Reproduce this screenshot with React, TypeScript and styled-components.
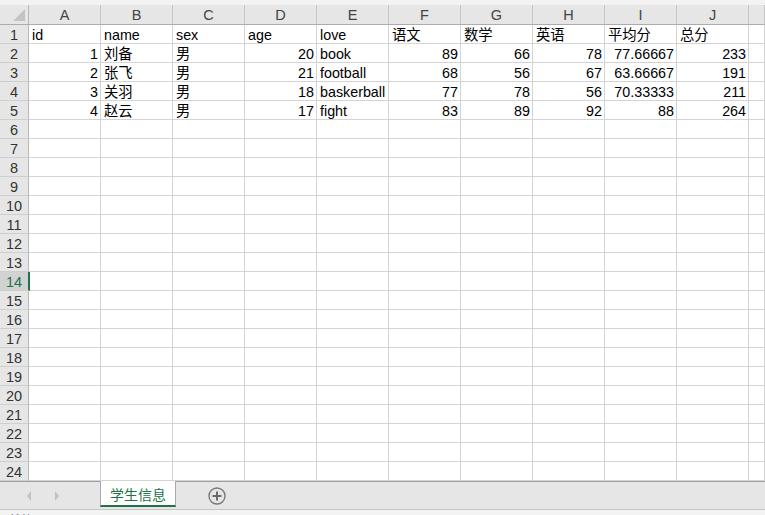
import React from "react";
import styled, { createGlobalStyle } from "styled-components";

const Global = createGlobalStyle`
  html, body { margin: 0; padding: 0; background: #ffffff; }
  body { font-family: "Liberation Sans", "Noto Sans CJK SC", sans-serif; overflow: hidden; }
  #root { width: 765px; height: 515px; overflow: hidden; }
`;

const Page = styled.div`
  width: 765px;
  height: 515px;
  display: flex;
  flex-direction: column;
  overflow: hidden;
  background: #ffffff;
`;

const TopBand = styled.div`
  height: 5px;
  flex: none;
  background: #f3f3f3;
`;

const Sheet = styled.div`
  display: grid;
  grid-template-columns: 29px repeat(10, 72px) 1fr;
  grid-auto-rows: 19px;
  grid-template-rows: 20px;
  flex: none;
  height: 476px;
  overflow: hidden;
`;

const Corner = styled.div`
  position: relative;
  background: #e6e6e6;
  border-right: 1px solid #b8b8b8;
  border-bottom: 1px solid #acacac;
  &::after {
    content: "";
    position: absolute;
    right: 3px;
    bottom: 3px;
    width: 0;
    height: 0;
    border-left: 12px solid transparent;
    border-bottom: 12px solid #c4c4c4;
  }
`;

const ColHead = styled.div`
  background: #e6e6e6;
  border-right: 1px solid #c6c6c6;
  border-bottom: 1px solid #acacac;
  display: flex;
  align-items: center;
  justify-content: center;
  color: #444444;
  font-size: 14.5px;
  padding-top: 1px;
`;

const RowHead = styled.div<{ $active?: boolean }>`
  background: ${(p) => (p.$active ? "#d2d2d2" : "#e6e6e6")};
  border-right: ${(p) => (p.$active ? "2px solid #217346" : "1px solid #b8b8b8")};
  margin-right: ${(p) => (p.$active ? "-1px" : "0")};
  border-bottom: 1px solid #cfcfcf;
  display: flex;
  align-items: center;
  justify-content: center;
  color: ${(p) => (p.$active ? "#217346" : "#333333")};
  font-size: 14.5px;
  line-height: 18px;
  padding-top: 1px;
  box-sizing: border-box;
  position: relative;
  z-index: 1;
`;

const Cell = styled.div<{ $num?: boolean }>`
  border-right: 1px solid #d4d4d4;
  border-bottom: 1px solid #d4d4d4;
  display: flex;
  align-items: center;
  justify-content: ${(p) => (p.$num ? "flex-end" : "flex-start")};
  padding: 1px ${(p) => (p.$num ? "2px" : "0")} 0 ${(p) => (p.$num ? "0" : "3px")};
  box-sizing: border-box;
  font-size: 14.3px;
  line-height: 18px;
  color: #000000;
  white-space: nowrap;
  overflow: hidden;
`;

const TabBar = styled.div`
  height: 27px;
  flex: none;
  background: #e6e6e6;
  border-top: 1px solid #9f9f9f;
  display: flex;
  align-items: stretch;
`;

const NavArea = styled.div`
  width: 100px;
  display: flex;
  align-items: center;
  padding-left: 27px;
  gap: 24px;
  box-sizing: border-box;
`;

const Arrow = styled.span<{ $dir: "l" | "r" }>`
  width: 0;
  height: 0;
  border-top: 5px solid transparent;
  border-bottom: 5px solid transparent;
  ${(p) => (p.$dir === "l" ? "border-right: 4px solid #c2c2c2;" : "border-left: 4px solid #c2c2c2;")}
`;

const Tab = styled.div`
  width: 74px;
  margin-top: -1px;
  margin-bottom: 2px;
  background: #ffffff;
  border-left: 1px solid #a9a9a9;
  border-right: 1px solid #a9a9a9;
  border-bottom: 2px solid #217346;
  display: flex;
  align-items: center;
  justify-content: center;
  color: #217346;
  font-family: "Noto Sans CJK SC", sans-serif;
  font-size: 14px;
  padding-top: 1px;
`;

const AddArea = styled.div`
  display: flex;
  align-items: center;
  padding-left: 32px;
`;

const StatusBar = styled.div`
  flex: 1;
  background: #f3f3f3;
  border-top: 1px solid #c6c6c6;
  padding-left: 9px;
  font-family: "Noto Sans CJK SC", sans-serif;
  font-size: 12px;
  color: #444444;
  line-height: 20px;
  overflow: hidden;
`;

const cols = ["A", "B", "C", "D", "E", "F", "G", "H", "I", "J", ""];

type V = string | number;
const data: V[][] = [
  ["id", "name", "sex", "age", "love", "语文", "数学", "英语", "平均分", "总分"],
  [1, "刘备", "男", 20, "book", 89, 66, 78, "77.66667", 233],
  [2, "张飞", "男", 21, "football", 68, 56, 67, "63.66667", 191],
  [3, "关羽", "男", 18, "baskerball", 77, 78, 56, "70.33333", 211],
  [4, "赵云", "男", 17, "fight", 83, 89, 92, 88, 264],
];

const isNum = (v: V) => typeof v === "number" || /^[\d.]+$/.test(String(v));

export default function App() {
  const rows = Array.from({ length: 24 }, (_, i) => i + 1);
  return (
    <Page>
      <Global />
      <TopBand />
      <Sheet>
        <Corner />
        {cols.map((c, i) => (
          <ColHead key={"h" + i}>{c}</ColHead>
        ))}
        {rows.map((r) => (
          <React.Fragment key={r}>
            <RowHead $active={r === 14}>{r}</RowHead>
            {cols.map((_, ci) => {
              const v = data[r - 1]?.[ci];
              const has = v !== undefined && v !== "";
              return (
                <Cell key={ci} $num={has && isNum(v as V)}>
                  {has ? String(v) : ""}
                </Cell>
              );
            })}
          </React.Fragment>
        ))}
      </Sheet>
      <TabBar>
        <NavArea>
          <Arrow $dir="l" />
          <Arrow $dir="r" />
        </NavArea>
        <Tab>学生信息</Tab>
        <AddArea>
          <svg width="18" height="18" viewBox="0 0 18 18">
            <circle cx="9" cy="9" r="8" fill="none" stroke="#7a7a7a" strokeWidth="1.4" />
            <path d="M9 4.5v9M4.5 9h9" stroke="#6a6a6a" strokeWidth="2" />
          </svg>
        </AddArea>
      </TabBar>
      <StatusBar>就绪</StatusBar>
    </Page>
  );
}
